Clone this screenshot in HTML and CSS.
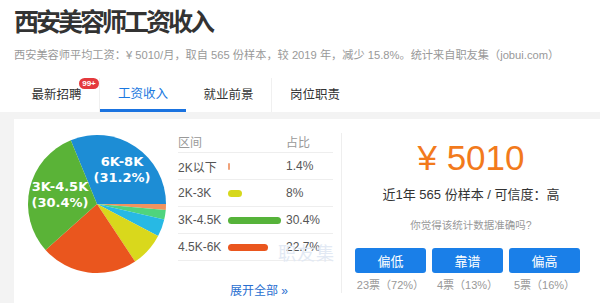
FILE: index.html
```html
<!DOCTYPE html>
<html>
<head>
  <title>西安美容师工资收入</title>
  <link rel="stylesheet" href="styles.css">
</head>
<body>
  <div class="head">
    <h1 class="title">西安美容师工资收入</h1>
    <p class="summary">西安美容师平均工资：¥ 5010/月，取自 565 份样本，较 2019 年，减少 15.8%。统计来自职友集（jobui.com）</p>
    <div class="tabs">
      <div class="tab">最新招聘<span class="badge">99+</span></div>
      <div class="tab active">工资收入</div>
      <div class="tab">就业前景</div>
      <div class="tab">岗位职责</div>
    </div>
  </div>

  <div class="panel">
    <div class="chart-side">
      <svg class="pie" width="160" height="160" viewBox="0 0 160 160">
        <path d="M80 71 L53.79 7.17 A69 69 0 0 1 149 71 Z" fill="#1d8dd5"/>
        <path d="M80 71 L149 71 A69 69 0 0 1 148.73 77.06 Z" fill="#f2935e"/>
        <path d="M80 71 L148.73 77.06 A69 69 0 0 1 147.24 86.47 Z" fill="#4fd47e"/>
        <path d="M80 71 L147.24 86.47 A69 69 0 0 1 141.08 103.09 Z" fill="#27b9e4"/>
        <path d="M80 71 L141.08 103.09 A69 69 0 0 1 118.07 128.55 Z" fill="#d9d81c"/>
        <path d="M80 71 L118.07 128.55 A69 69 0 0 1 28.55 116.98 Z" fill="#ea561e"/>
        <path d="M80 71 L28.55 116.98 A69 69 0 0 1 53.79 7.17 Z" fill="#5ab337"/>
        <text class="pie-label" x="105" y="33">6K-8K</text>
        <text class="pie-label" x="105" y="49">(31.2%)</text>
        <text class="pie-label" x="43" y="58">3K-4.5K</text>
        <text class="pie-label" x="43" y="74">(30.4%)</text>
      </svg>

      <div class="range-table">
        <div class="row header">
          <span>区间</span><span></span><span>占比</span>
        </div>
        <div class="row">
          <span>2K以下</span><span><i class="bar" style="width: 2px; background: #f0a27a;"></i></span><span>1.4%</span>
        </div>
        <div class="row">
          <span>2K-3K</span><span><i class="bar" style="width: 14px; background: #d6d81c;"></i></span><span>8%</span>
        </div>
        <div class="row">
          <span>3K-4.5K</span><span><i class="bar" style="width: 53px; background: #56b33a;"></i></span><span>30.4%</span>
        </div>
        <div class="row">
          <span>4.5K-6K</span><span><i class="bar" style="width: 40px; background: #ea561e;"></i></span><span>22.7%</span>
        </div>
        <a class="more" href="#">展开全部 »</a>
        <span class="watermark">职友集</span>
      </div>
    </div>

    <div class="stat-side">
      <div class="amount">¥ 5010</div>
      <div class="sample">近1年 565 份样本 / 可信度：高</div>
      <div class="question">你觉得该统计数据准确吗?</div>
      <div class="votes">
        <div class="vote"><button>偏低</button><span>23票（72%）</span></div>
        <div class="vote"><button>靠谱</button><span>4票（13%）</span></div>
        <div class="vote"><button>偏高</button><span>5票（16%）</span></div>
      </div>
    </div>
  </div>
</body>
</html>
```

FILE: styles.css
```css
body {
  margin: 0;
  background: #f3f3f3;
  font-family: "Liberation Sans", "Noto Sans CJK SC", sans-serif;
  color: #333;
}

.head {
  background: #fff;
  padding: 7px 0 0 14px;
}

.title {
  margin: 0;
  font-size: 25px;
  line-height: 30px;
  font-weight: bold;
  letter-spacing: -3px;
  color: #333;
}

.summary {
  margin: 10px 0 0;
  font-size: 11.2px;
  line-height: 16px;
  color: #999;
  white-space: nowrap;
}

.tabs {
  display: flex;
  margin-top: 15px;
  height: 34px;
}

.tab {
  position: relative;
  width: 86px;
  box-sizing: border-box;
  text-align: center;
  font-size: 12.5px;
  line-height: 34px;
  color: #333;
}

.tab.active {
  color: #1a78e0;
  border-bottom: 3px solid #1a73e0;
  line-height: 32px;
}

.tab:nth-child(3) {
  border-right: 1px solid #f0f0f0;
}

.tab:first-child {
  border-right: 1px solid #f0f0f0;
}

.badge {
  position: absolute;
  left: 65px;
  top: 0;
  width: 20px;
  height: 11px;
  border-radius: 6px;
  background: #e4393c;
  color: #fff;
  font-size: 8px;
  font-weight: bold;
  line-height: 11px;
  text-align: center;
}

.panel {
  display: flex;
  margin: 7px 0 0 14px;
  background: #fff;
  padding-top: 11px;
  height: 173px;
}

.chart-side {
  display: flex;
  width: 327px;
}

.pie {
  margin: 3px 0 0 3px;
}

.pie-label {
  font-family: "DejaVu Sans", sans-serif;
  font-size: 13px;
  font-weight: bold;
  fill: #fff;
  text-anchor: middle;
}

.range-table {
  position: relative;
  width: 155px;
  margin-left: 1px;
  font-size: 12px;
  color: #555;
}

.row {
  display: grid;
  grid-template-columns: 50px 58px 1fr;
  align-items: center;
  height: 26px;
  border-bottom: 1px solid #eee;
}

.row.header {
  height: 22px;
  color: #999;
}

.bar {
  display: block;
  height: 7px;
  border-radius: 4px;
}

.more {
  display: block;
  margin: 22px 0 0 52px;
  line-height: 16px;
  color: #2a6fd0;
  text-decoration: none;
}

.watermark {
  position: absolute;
  left: 100px;
  top: 113px;
  font-size: 18px;
  line-height: 22px;
  color: #e2e9f4;
  letter-spacing: 1px;
  white-space: nowrap;
}

.stat-side {
  flex: 1;
  margin-top: 3px;
  height: 160px;
  border-left: 1px solid #eee;
  text-align: center;
}

.amount {
  padding-top: 5px;
  font-size: 35px;
  line-height: 40px;
  color: #f27a1c;
}

.sample {
  margin-top: 7px;
  font-size: 13px;
  line-height: 20px;
  color: #333;
}

.question {
  margin-top: 12px;
  font-size: 10.5px;
  line-height: 16px;
  color: #999;
}

.votes {
  display: flex;
  gap: 6px;
  margin: 15px 0 0 13px;
}

.vote {
  display: flex;
  flex-direction: column;
  width: 71px;
}

.vote button {
  height: 25px;
  border: 0;
  border-radius: 3px;
  background: #1a7fe8;
  color: #fff;
  font-family: inherit;
  font-size: 13px;
}

.vote span {
  margin-top: 4px;
  font-size: 11px;
  line-height: 16px;
  color: #999;
}
```
